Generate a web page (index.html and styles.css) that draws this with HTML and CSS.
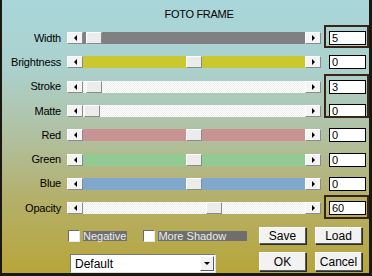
FILE: index.html
```html
<!DOCTYPE html>
<html>
<head>
<meta charset="utf-8">
<link rel="stylesheet" href="styles.css">
</head>
<body>
<div class="win">
  <div class="title">FOTO FRAME</div>
  <div class="rows">
    <div class="row"><span class="lbl">Width</span><span class="arr"><i class="tri-l"></i></span><span class="track t-gray"><span class="thumb" style="left:3px"></span></span><span class="arr"><i class="tri-r"></i></span><span class="val">5</span></div>
    <div class="row"><span class="lbl">Brightness</span><span class="arr"><i class="tri-l"></i></span><span class="track t-yellow"><span class="thumb" style="left:103px"></span></span><span class="arr"><i class="tri-r"></i></span><span class="val">0</span></div>
    <div class="row"><span class="lbl">Stroke</span><span class="arr"><i class="tri-l"></i></span><span class="track t-white"><span class="thumb" style="left:3px"></span></span><span class="arr"><i class="tri-r"></i></span><span class="val">3</span></div>
    <div class="row"><span class="lbl">Matte</span><span class="arr"><i class="tri-l"></i></span><span class="track t-white"><span class="thumb" style="left:1px"></span></span><span class="arr"><i class="tri-r"></i></span><span class="val">0</span></div>
    <div class="row"><span class="lbl">Red</span><span class="arr"><i class="tri-l"></i></span><span class="track t-red"><span class="thumb" style="left:103px"></span></span><span class="arr"><i class="tri-r"></i></span><span class="val">0</span></div>
    <div class="row"><span class="lbl">Green</span><span class="arr"><i class="tri-l"></i></span><span class="track t-green"><span class="thumb" style="left:103px"></span></span><span class="arr"><i class="tri-r"></i></span><span class="val">0</span></div>
    <div class="row"><span class="lbl">Blue</span><span class="arr"><i class="tri-l"></i></span><span class="track t-blue"><span class="thumb" style="left:103px"></span></span><span class="arr"><i class="tri-r"></i></span><span class="val">0</span></div>
    <div class="row"><span class="lbl">Opacity</span><span class="arr"><i class="tri-l"></i></span><span class="track t-white"><span class="thumb" style="left:123px"></span></span><span class="arr"><i class="tri-r"></i></span><span class="val">60</span></div>
  </div>
  <div class="bottom">
    <div class="brow1">
      <span class="chk"></span><span class="clbl">Negative</span>
      <span class="chk chk2"></span><span class="clbl clbl-wide">More Shadow</span>
      <span class="btn btn-first">Save</span><span class="btn">Load</span>
    </div>
    <div class="brow2">
      <div class="combo"><span class="combo-text">Default</span><span class="combo-btn"><i class="tri-d"></i></span></div>
      <span class="btn btn-tall btn-first">OK</span><span class="btn btn-tall">Cancel</span>
    </div>
  </div>
  <div class="frame fr-width"></div>
  <div class="frame fr-stroke"></div>
  <div class="frame fr-opacity"></div>
</div>
</body>
</html>
```
FILE: styles.css
```css
html, body {
  margin: 0;
  padding: 0;
}
body {
  font-family: "Liberation Sans", Arial, sans-serif;
  font-size: 11px;
  color: #000;
}
.win {
  position: relative;
  width: 372px;
  height: 276px;
  box-sizing: border-box;
  border-left: 2px solid #1a1810;
  border-right: 3px solid #1a1810;
  border-bottom: 3px solid #1a1810;
  background: linear-gradient(to bottom, #a9d6da 0%, #abd1cd 25%, #b0c0a0 50%, #b4b06c 72%, #b8a63a 100%);
  overflow: hidden;
}
.title {
  padding-top: 8px;
  padding-left: 27px;
  line-height: 13px;
  height: 13px;
  text-align: center;
  letter-spacing: -0.3px;
}
.rows {
  margin-top: 5px;
  display: grid;
  grid-auto-rows: 24.3px;
}
.row {
  display: flex;
  align-items: center;
}
.lbl {
  width: 59px;
  padding-right: 1px;
  margin-right: 5px;
  text-align: right;
  letter-spacing: -0.2px;
  line-height: 13px;
}
.arr {
  width: 16px;
  height: 12px;
  box-sizing: border-box;
  background: #f4f4f4;
  border-top: 1px solid #ffffff;
  border-left: 1px solid #ffffff;
  border-right: 1px solid #8a8a8a;
  border-bottom: 1px solid #8a8a8a;
  display: flex;
  align-items: center;
  justify-content: center;
}
.tri-l {
  display: block;
  width: 0;
  height: 0;
  border-right: 3px solid #000;
  border-top: 3px solid transparent;
  border-bottom: 3px solid transparent;
}
.tri-r {
  display: block;
  width: 0;
  height: 0;
  border-left: 3px solid #000;
  border-top: 3px solid transparent;
  border-bottom: 3px solid transparent;
}
.track {
  position: relative;
  width: 222px;
  height: 12px;
}
.t-gray { background: #808080; }
.t-yellow { background: #c9c82f; }
.t-white { background: repeating-conic-gradient(#ffffff 0 25%, #ececec 0 50%) 0 0 / 2px 2px; }
.t-red { background: #c99393; }
.t-green { background: #93c993; }
.t-blue { background: #7fa8cc; }
.thumb {
  position: absolute;
  top: 0;
  width: 16px;
  height: 12px;
  box-sizing: border-box;
  background: #ececec;
  border-top: 1px solid #ffffff;
  border-left: 1px solid #ffffff;
  border-right: 1px solid #8a8a8a;
  border-bottom: 1px solid #8a8a8a;
}
.val {
  margin-left: 8px;
  width: 37px;
  height: 14px;
  box-sizing: border-box;
  background: #fff;
  border: 1px solid #000;
  padding-left: 2px;
  line-height: 12px;
}
.bottom {
  margin-top: 7px;
  padding-left: 66px;
  padding-right: 7px;
}
.brow1 {
  display: flex;
  align-items: center;
  height: 17px;
}
.chk {
  width: 12px;
  height: 12px;
  box-sizing: border-box;
  background: #fff;
  border-top: 1px solid #6a6a6a;
  border-left: 1px solid #6a6a6a;
  border-right: 1px solid #e8e8e8;
  border-bottom: 1px solid #e8e8e8;
  margin-right: 3px;
}
.chk2 {
  margin-left: 16px;
}
.clbl {
  background: #6e6e6e;
  color: #ececec;
  line-height: 10px;
  height: 10px;
  padding-right: 1px;
}
.clbl-wide {
  width: 88px;
}
.btn {
  width: 47px;
  height: 17px;
  box-sizing: border-box;
  background: #f2f2f2;
  border-top: 1px solid #ffffff;
  border-left: 1px solid #ffffff;
  border-right: 1px solid #5a5a5a;
  border-bottom: 1px solid #5a5a5a;
  box-shadow: 1px 1px 0 #2a2a2a;
  display: flex;
  align-items: center;
  justify-content: center;
  margin-left: 9px;
  font-size: 12px;
}
.btn-first {
  margin-left: auto;
}
.btn-tall {
  height: 19px;
}
.brow2 {
  margin-top: 8px;
  display: flex;
  align-items: flex-start;
}
.combo {
  margin-top: 2px;
  margin-left: 2px;
  width: 146px;
  height: 19px;
  box-sizing: border-box;
  background: #fff;
  border-top: 1px solid #7a7a7a;
  border-left: 1px solid #7a7a7a;
  border-right: 1px solid #e0e0e0;
  border-bottom: 1px solid #e0e0e0;
  display: flex;
  align-items: center;
  padding: 1px;
}
.combo-text {
  flex: 1;
  padding-left: 3px;
  font-size: 12px;
}
.combo-btn {
  width: 14px;
  height: 15px;
  box-sizing: border-box;
  background: #f2f2f2;
  border-top: 1px solid #ffffff;
  border-left: 1px solid #ffffff;
  border-right: 1px solid #5a5a5a;
  border-bottom: 1px solid #5a5a5a;
  display: flex;
  align-items: center;
  justify-content: center;
}
.tri-d {
  display: block;
  width: 0;
  height: 0;
  border-top: 3px solid #000;
  border-left: 3px solid transparent;
  border-right: 3px solid transparent;
}
.frame {
  position: absolute;
  left: 322px;
  width: 45px;
  box-sizing: border-box;
  border: 2px solid #3a2418;
}
.fr-width { top: 25px; height: 23px; }
.fr-stroke { top: 74px; height: 44px; }
.fr-opacity { top: 195px; height: 24px; }
```
